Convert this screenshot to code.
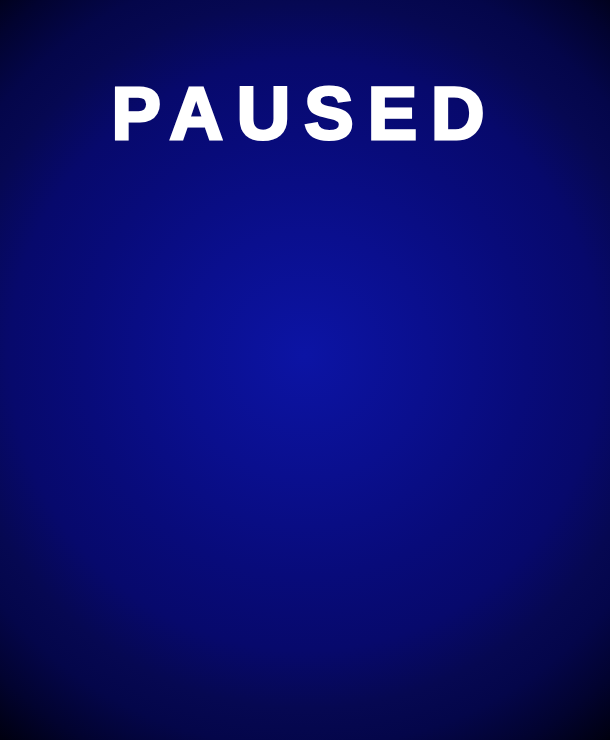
export default function App() {
  return (
    <div className="w-full h-[740px] overflow-hidden bg-[radial-gradient(circle_at_50%_48%,#0c14a4_0%,#0a0f8e_25%,#080b7a_45%,#07096c_60%,#060852_72%,#04064a_80%,#020330_90%,#00000f_100%)]">
      <h1 className="pt-[77px] text-center text-white text-[74px] leading-none font-bold tracking-[14px] font-['Liberation_Sans',Arial,sans-serif] [-webkit-text-stroke:3px_white]">
        PAUSED
      </h1>
    </div>
  );
}
